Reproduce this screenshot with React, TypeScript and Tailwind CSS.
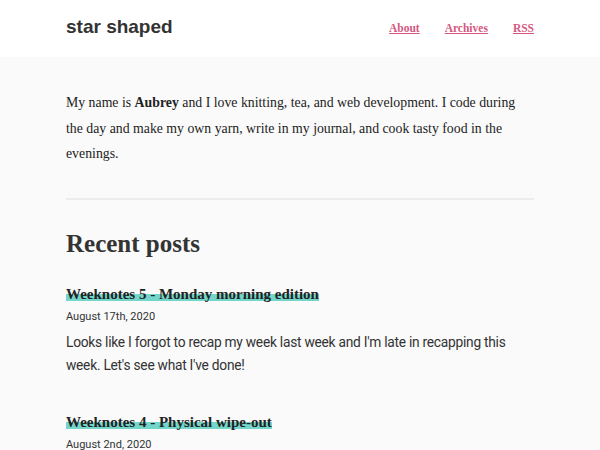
import React from "react";

const posts = [
  {
    title: "Weeknotes 5 - Monday morning edition",
    date: "August 17th, 2020",
    excerpt:
      "Looks like I forgot to recap my week last week and I'm late in recapping this week. Let's see what I've done!",
  },
  {
    title: "Weeknotes 4 - Physical wipe-out",
    date: "August 2nd, 2020",
    excerpt: "A quieter week with a lot of rest and not much else going on.",
  },
];

const serif = "font-['Liberation_Serif',serif]";
const sans = "font-['Roboto',sans-serif]";

const App = () => {
  return (
    <div className="min-h-[450px] bg-[#fafafa] text-[#222]">
      {/* Header */}
      <header className="bg-white h-[57px]">
        <div className="w-[468px] mx-auto flex items-center justify-between h-full">
          <a className="font-['Liberation_Sans',sans-serif] text-[19px] font-bold text-[#333] mb-[3px]">
            star shaped
          </a>
          <nav className={`${serif} flex gap-[25px] text-[11.5px] font-bold mt-[1px]`}>
            {["About", "Archives", "RSS"].map((item) => (
              <a key={item} className="text-[#d5577f] underline">
                {item}
              </a>
            ))}
          </nav>
        </div>
      </header>

      <main className="w-[468px] mx-auto pt-[33px]">
        {/* About */}
        <p className={`${serif} text-[13.8px] leading-[25.5px] text-[#222]`}>
          My name is <strong>Aubrey</strong> and I love knitting, tea, and web
          development. I code during the day and make my own yarn, write in my
          journal, and cook tasty food in the evenings.
        </p>

        <hr className="mt-[31px] border-0 h-[2px] bg-[#ececec]" />

        {/* Recent posts */}
        <h2 className={`${serif} text-[25px] font-bold text-[#333] mt-[29px] leading-[30px]`}>
          Recent posts
        </h2>

        <ul className="mt-[25px] flex flex-col gap-[35px]">
          {posts.map((post) => (
            <li key={post.title}>
              <h3 className={`${serif} text-[15px] font-bold leading-[20px]`}>
                <a className="text-[#222] bg-[linear-gradient(transparent_50%,#72d6ca_50%,#72d6ca_93%,transparent_93%)]">
                  {post.title}
                </a>
              </h3>
              <p className={`${sans} text-[11px] leading-[14px] text-[#333] mt-[6px]`}>
                {post.date}
              </p>
              <p
                className={`${sans} text-[13.75px] tracking-[-0.25px] leading-[23px] text-[#333] mt-[7px]`}
              >
                {post.excerpt}
              </p>
            </li>
          ))}
        </ul>
      </main>
    </div>
  );
};

export default App;
